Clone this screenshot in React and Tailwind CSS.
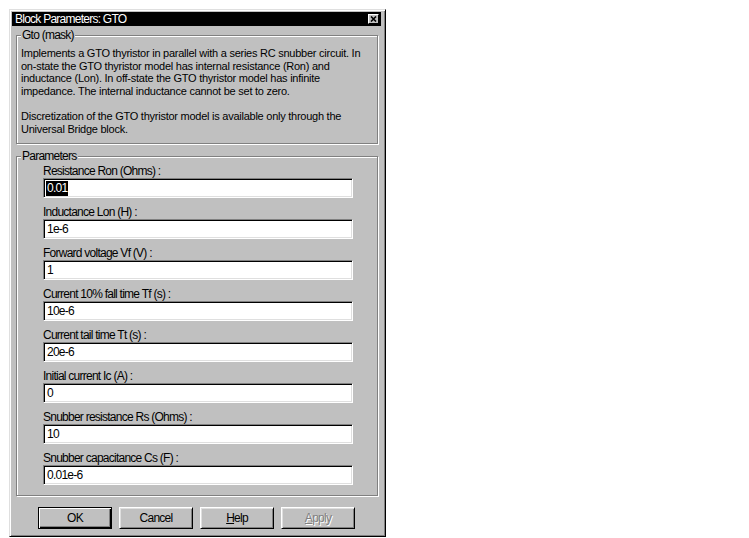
import React from "react";

const fields = [
  { label: "Resistance Ron (Ohms) :", value: "0.01", selected: true },
  { label: "Inductance Lon (H) :", value: "1e-6" },
  { label: "Forward voltage Vf (V) :", value: "1" },
  { label: "Current 10% fall time Tf (s) :", value: "10e-6" },
  { label: "Current tail time Tt (s) :", value: "20e-6" },
  { label: "Initial current Ic (A) :", value: "0" },
  { label: "Snubber resistance Rs (Ohms) :", value: "10" },
  { label: "Snubber capacitance Cs (F) :", value: "0.01e-6" },
];

const GroupBox = ({ title, className, children }) => (
  <div
    className={
      "ml-[4px] mr-[5px] border border-[#808080] shadow-[inset_1px_1px_#fff,1px_1px_#fff] " +
      className
    }
  >
    <div className="-mt-[7px] ml-[4px] w-fit bg-[#c0c0c0] px-[1px] leading-[13px] h-[13px]">
      {title}
    </div>
    {children}
  </div>
);

const Field = ({ label, value, selected }) => (
  <div className="mb-[8px] last:mb-0">
    <div className="leading-[13px] h-[13px]">{label}</div>
    <div className="w-[310px] h-[20px] bg-white border border-t-[#808080] border-l-[#808080] border-b-white border-r-white shadow-[inset_1px_1px_#000,inset_-1px_-1px_#dfdfdf] flex items-center pl-[2px]">
      {selected ? (
        <span className="bg-black text-white px-[1px] leading-[15px]">{value}</span>
      ) : (
        <span className="px-[1px]">{value}</span>
      )}
    </div>
  </div>
);

const Button = ({ children, isDefault, disabled }) => (
  <button
    className={
      "w-[74px] h-[22px] bg-[#c0c0c0] flex items-center justify-center border " +
      (isDefault
        ? "border-black shadow-[inset_1px_1px_#fff,inset_-1px_-1px_#000,inset_-2px_-2px_#808080]"
        : "border-t-white border-l-white border-b-black border-r-black shadow-[inset_1px_1px_#dfdfdf,inset_-1px_-1px_#808080]") +
      (disabled ? " text-[#808080] [text-shadow:1px_1px_0_#fff]" : " text-black")
    }
  >
    {children}
  </button>
);

export default function App() {
  return (
    <div className="w-[749px] h-[538px] bg-white overflow-hidden pt-[9px] pl-[9px] font-['Liberation_Sans',Arial,sans-serif] text-[12px] tracking-[-0.75px] text-black">
      <div className="w-[377px] h-[528px] bg-[#c0c0c0] border border-t-[#dfdfdf] border-l-[#dfdfdf] border-r-black border-b-black shadow-[inset_1px_1px_#fff,inset_-1px_-1px_#808080] p-[2px] flex flex-col">
        {/* title bar */}
        <div className="h-[14px] mr-[2px] bg-black text-white flex items-center justify-between pl-[3px] pr-[2px]">
          <span className="leading-[14px]">Block Parameters: GTO</span>
          <div className="w-[11px] h-[10px] bg-[#c0c0c0] border border-t-white border-l-white border-b-black border-r-black flex items-center justify-center">
            <svg width="7" height="6" viewBox="0 0 7 6">
              <path d="M1 0.5 L6 5.5 M6 0.5 L1 5.5" stroke="#000" strokeWidth="1.6" />
            </svg>
          </div>
        </div>

        <GroupBox title="Gto (mask)" className="mt-[9px] pb-[8px]">
          <div className="mt-[5px] pl-[4px] text-[11px] tracking-[-0.25px] leading-[12.5px] whitespace-nowrap">
            <p>
              Implements a GTO thyristor in parallel with a series RC snubber circuit. In
              <br />
              on-state the GTO thyristor model has internal resistance (Ron) and
              <br />
              inductance (Lon). In off-state the GTO thyristor model has infinite
              <br />
              impedance. The internal inductance cannot be set to zero.
            </p>
            <p className="mt-[13px]">
              Discretization of the GTO thyristor model is available only through the
              <br />
              Universal Bridge block.
            </p>
          </div>
        </GroupBox>

        <GroupBox title="Parameters" className="mt-[12px] pb-[10px]">
          <div className="mt-[2px] pl-[26px]">
            {fields.map((f, i) => (
              <Field key={i} {...f} />
            ))}
          </div>
        </GroupBox>

        <div className="flex gap-[7px] pl-[26px] mt-[11px]">
          <Button isDefault>OK</Button>
          <Button>Cancel</Button>
          <Button>
            <span>
              <span className="underline">H</span>elp
            </span>
          </Button>
          <Button disabled>
            <span>
              <span className="underline">A</span>pply
            </span>
          </Button>
        </div>
      </div>
    </div>
  );
}
